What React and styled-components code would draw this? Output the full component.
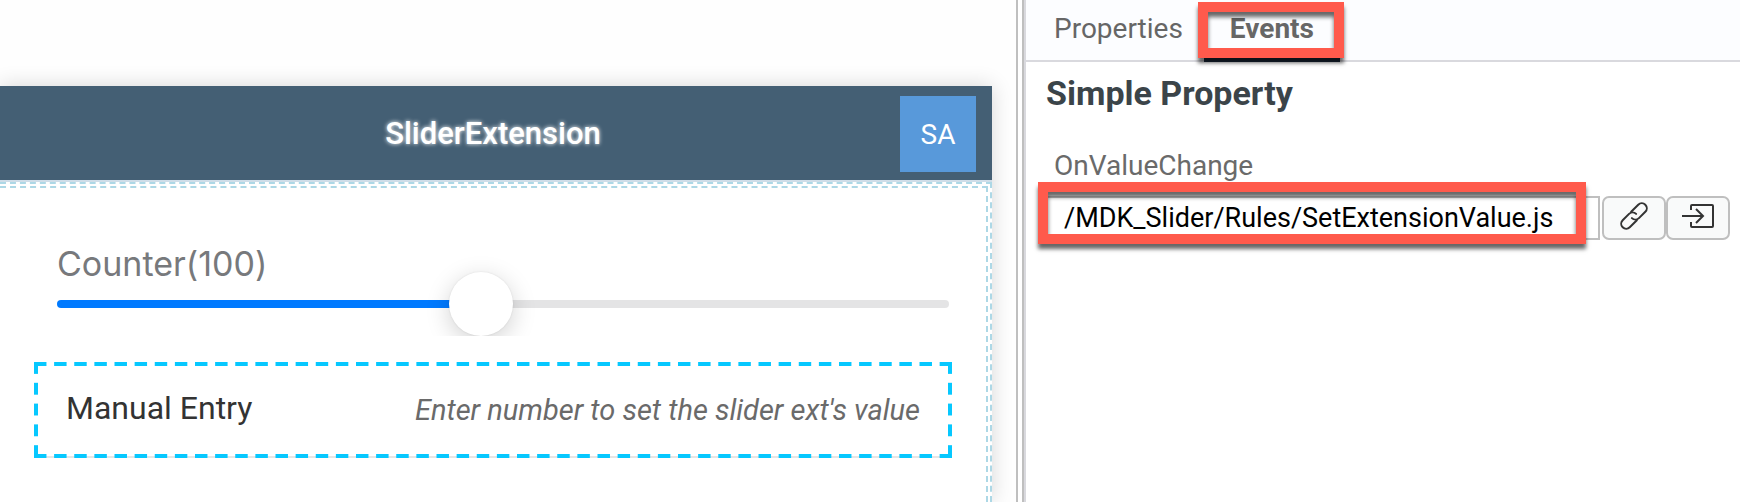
import React, { useState } from 'react';
import styled, { createGlobalStyle } from 'styled-components';

const GlobalStyle = createGlobalStyle`
  * { box-sizing: border-box; }
  body {
    margin: 0;
    background: #fff;
    font-family: Roboto, "Liberation Sans", sans-serif;
  }
  button, input { font-family: inherit; }
`;

const Workspace = styled.main`
  display: grid;
  grid-template-columns: minmax(0, 1016fr) 8px minmax(0, 716fr);
  min-height: 100vh;
`;

const Canvas = styled.section`
  display: flex;
  flex-direction: column;
  overflow: hidden;
  padding: 86px 24px 0 0;
  background: #fefefe;
`;

const Device = styled.div`
  flex: 1;
  display: flex;
  flex-direction: column;
  background: #fff;
  box-shadow: 0 0 20px rgba(0, 0, 0, 0.16);
`;

const ActionBar = styled.header`
  display: grid;
  grid-template-columns: 76px 1fr 76px;
  align-items: center;
  height: 96px;
  padding: 2px 16px 0 10px;
  background: #445f74;
  border-bottom: 2px solid #cfdde8;
`;

const ScreenTitle = styled.h1`
  grid-column: 2;
  margin: 0;
  text-align: center;
  font-size: 31px;
  line-height: 36px;
  font-weight: 500;
  color: #fff;
  text-shadow: 0 0 4px #fff;
`;

const Avatar = styled.button`
  width: 76px;
  height: 76px;
  padding: 0;
  border: 0;
  background: #5899da;
  color: #fff;
  font-size: 28px;
`;

const DropZone = styled.div`
  flex: 1;
  display: flex;
  border: 2px dashed #add8e6;
  border-width: 2px 2px 0 0;
  padding: 2px 2px 0 0;
`;

const Section = styled.div`
  flex: 1;
  border: 2px dashed #add8e6;
  border-width: 2px 2px 0 0;
  padding: 56px 34px 24px;
`;

const SliderField = styled.div`
  overflow: hidden;
  padding: 0 3px 0 23px;
  height: 92px;
`;

const SliderLabel = styled.label`
  display: block;
  font-family: Inter, "Liberation Sans", sans-serif;
  font-size: 34px;
  line-height: 40px;
  height: 28px;
  color: #77797c;
`;

const Range = styled.input`
  appearance: none;
  display: block;
  width: 100%;
  height: 64px;
  margin: 0;
  background: transparent;

  &::-webkit-slider-runnable-track {
    height: 8px;
    border-radius: 4px;
    background: linear-gradient(to right, #007aff var(--fill), #e4e4e5 var(--fill));
  }

  &::-webkit-slider-thumb {
    appearance: none;
    width: 64px;
    height: 64px;
    margin-top: -28px;
    border-radius: 50%;
    background: #fff;
    box-shadow: 0 6px 24px rgba(0, 0, 0, 0.18), 0 0 2px rgba(0, 0, 0, 0.1);
  }
`;

const dash = '#06c8ff 12px, transparent 12px';

const EntryRow = styled.div`
  display: flex;
  align-items: center;
  height: 96px;
  margin-top: 26px;
  padding: 0 32px;
  background:
    linear-gradient(to right, ${dash}) left top / calc((100% + 8px) / 46) 4px repeat-x,
    linear-gradient(to right, ${dash}) left bottom / calc((100% + 8px) / 46) 4px repeat-x,
    linear-gradient(to bottom, ${dash}) left top / 4px calc((100% + 8px) / 5) repeat-y,
    linear-gradient(to bottom, ${dash}) right top / 4px calc((100% + 8px) / 5) repeat-y,
    linear-gradient(#e5e5e5, #e5e5e5) left bottom / 100% 2px no-repeat;
`;

const EntryLabel = styled.label`
  flex: none;
  padding-bottom: 4px;
  font-size: 32px;
  color: #333;
`;

const EntryInput = styled.input`
  flex: 1;
  min-width: 0;
  padding: 0;
  border: 0;
  outline: 0;
  background: transparent;
  text-align: right;
  font-size: 29px;
  line-height: 36px;

  &::placeholder {
    color: #6a6a6a;
    font-style: italic;
  }
`;

const Splitter = styled.div`
  border: 2px solid #bfbfbf;
  border-width: 0 2px;
  background: #fff;
`;

const Inspector = styled.aside`
  border-left: 2px solid #d9d9de;
  background: #fff;
`;

const TabBar = styled.nav`
  display: flex;
  gap: 21px;
  height: 62px;
  padding-left: 28px;
  border-bottom: 2px solid #d9d9de;
  background: #fcfdff;
`;

const Tab = styled.button`
  position: relative;
  height: 62px;
  padding: 0 ${(p) => (p.$active ? 26 : 0)}px 2px;
  border: 0;
  border-bottom: 4px solid ${(p) => (p.$active ? '#1b2a3b' : 'transparent')};
  background: transparent;
  color: #666;
  font-size: 28px;
  font-weight: ${(p) => (p.$active ? 700 : 400)};
`;

const Highlight = styled.span`
  position: absolute;
  inset: ${(p) => p.$inset};
  border: 10px solid #ff5a4c;
  box-shadow: 0 5px 4px rgba(0, 0, 0, 0.6), inset 0 5px 4px rgba(0, 0, 0, 0.6);
  pointer-events: none;
`;

const PropertyGroup = styled.div`
  padding: 11px 10px 0 20px;
`;

const GroupTitle = styled.h2`
  margin: 0;
  font-size: 34px;
  line-height: 40px;
  font-weight: 700;
  color: #3b4449;
`;

const FieldLabel = styled.label`
  display: block;
  margin: 35px 0 12px;
  padding-left: 8px;
  font-size: 28px;
  line-height: 36px;
  color: #6a6a6a;
`;

const FieldRow = styled.div`
  display: flex;
  height: 44px;
`;

const InputWrap = styled.div`
  position: relative;
  flex: 1;
  min-width: 0;
  margin-right: 2px;
`;

const PathInput = styled.input`
  display: block;
  width: 100%;
  height: 44px;
  padding: 0 16px;
  border: 2px solid #bfbfbf;
  outline: 0;
  background: #fff;
  color: #000;
  font-size: 27px;
`;

const IconButton = styled.button`
  display: flex;
  align-items: center;
  justify-content: center;
  width: 64px;
  height: 44px;
  padding: 0 0 4px;
  border: 2px solid #bfbfbf;
  border-radius: 7px;
  background: #f9fafa;
  color: #333;
`;

function LinkIcon() {
  return (
    <svg width="32" height="32" viewBox="0 0 32 32" fill="none" stroke="currentColor" strokeWidth="2" strokeLinecap="round" aria-hidden="true">
      <g transform="rotate(-45 16 16)">
        <path d="M17 11 H27 a5 5 0 0 1 0 10 H18 a5 5 0 0 1-5-5" />
        <path d="M15 21 H5 a5 5 0 0 1 0-10 H14 a5 5 0 0 1 5 5" />
      </g>
    </svg>
  );
}

function EnterIcon() {
  return (
    <svg width="32" height="28" viewBox="0 0 32 28" fill="none" stroke="currentColor" strokeWidth="2" aria-hidden="true">
      <path d="M9 8 V4 a1 1 0 0 1 1-1 H30 a1 1 0 0 1 1 1 V24 a1 1 0 0 1-1 1 H10 a1 1 0 0 1-1-1 V20" />
      <path d="M0 14 H21 M14 7 L21 14 L14 21" />
    </svg>
  );
}

export default function App() {
  const max = 211;
  const [value, setValue] = useState(100);
  const [path, setPath] = useState('/MDK_Slider/Rules/SetExtensionValue.js');

  return (
    <>
      <GlobalStyle />
      <Workspace>
        <Canvas>
          <Device>
            <ActionBar>
              <ScreenTitle>SliderExtension</ScreenTitle>
              <Avatar type="button">SA</Avatar>
            </ActionBar>
            <DropZone>
              <Section>
                <SliderField>
                  <SliderLabel htmlFor="counter">Counter({value})</SliderLabel>
                  <Range
                    id="counter"
                    type="range"
                    min="0"
                    max={max}
                    value={value}
                    onChange={(e) => setValue(Number(e.target.value))}
                    style={{ '--fill': `${(value / max) * 100}%` }}
                  />
                </SliderField>
                <EntryRow>
                  <EntryLabel htmlFor="manual-entry">Manual Entry</EntryLabel>
                  <EntryInput id="manual-entry" placeholder="Enter number to set the slider ext's value" />
                </EntryRow>
              </Section>
            </DropZone>
          </Device>
        </Canvas>
        <Splitter />
        <Inspector>
          <TabBar>
            <Tab type="button">Properties</Tab>
            <Tab type="button" $active>
              Events
              <Highlight $inset="2px -4px 0 -6px" />
            </Tab>
          </TabBar>
          <PropertyGroup>
            <GroupTitle>Simple Property</GroupTitle>
            <FieldLabel htmlFor="on-value-change">OnValueChange</FieldLabel>
            <FieldRow>
              <InputWrap>
                <PathInput id="on-value-change" value={path} onChange={(e) => setPath(e.target.value)} />
                <Highlight $inset="-14px 14px -4px -8px" />
              </InputWrap>
              <IconButton type="button" aria-label="Create link">
                <LinkIcon />
              </IconButton>
              <IconButton type="button" aria-label="Open rule">
                <EnterIcon />
              </IconButton>
            </FieldRow>
          </PropertyGroup>
        </Inspector>
      </Workspace>
    </>
  );
}
